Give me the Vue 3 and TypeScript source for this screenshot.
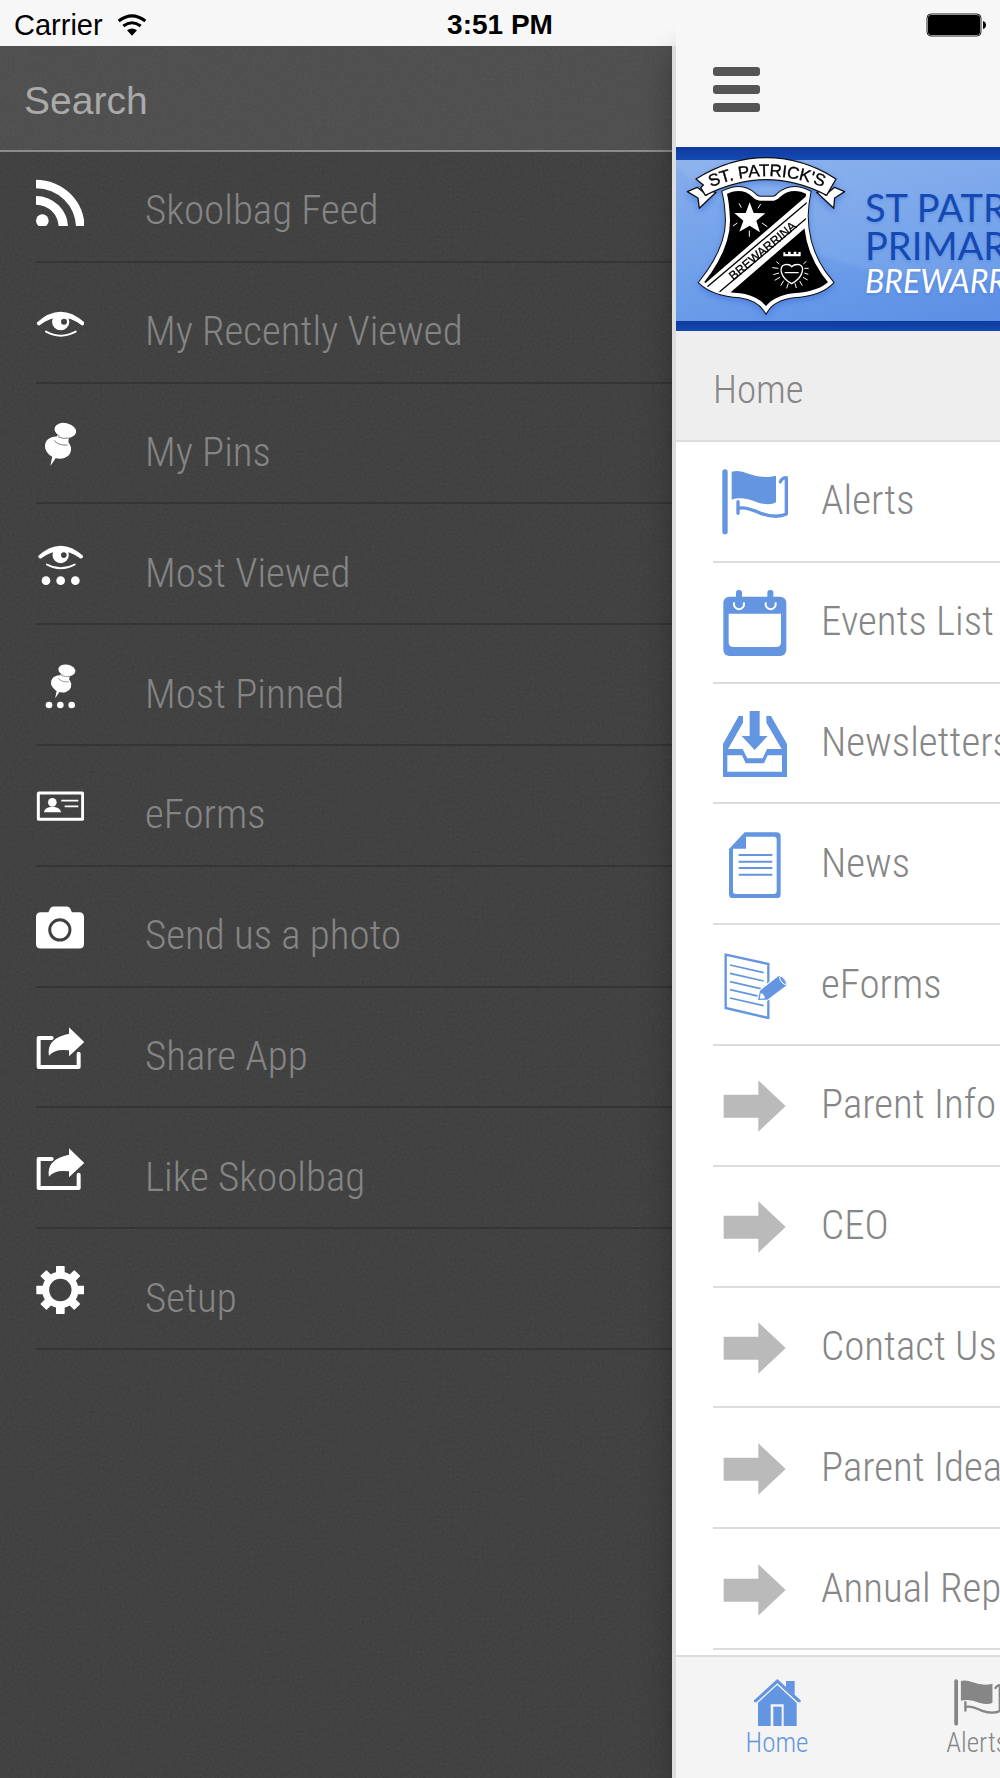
<script setup lang="ts">
import { ref } from 'vue'

interface Item {
  label: string
  icon: string
}

const query = ref('')

const eye =
  '<path d="M110 158Q182 92 254 158Q252 168 245 166Q182 118 119 166Q112 168 110 158Z"/><circle cx="182" cy="155" r="26"/><circle cx="192" cy="155" r="9" fill="#404040"/><path d="M138 185Q182 209 227 185" fill="none" stroke="#fff" stroke-width="6" stroke-linecap="round"/>'
const pin =
  '<ellipse cx="196" cy="481" rx="33" ry="22" transform="rotate(12 196 481)"/><path d="M172 496L207 502L203 530L163 516Z"/><ellipse cx="174" cy="533" rx="40" ry="32" transform="rotate(20 174 533)"/><path d="M157 558L168 563L151 588Z"/><path d="M163 511Q173 527 203 525M174 500Q190 508 206 504" fill="none" stroke="#404040" stroke-width="2"/>'
const flag =
  '<rect x="187" y="90" width="16" height="195" rx="8"/><path d="M215 97Q238 91 265 103Q308 119 348 109V189Q330 200 295 190Q245 170 215 181Z"/><path d="M361 127Q367 115 379 115V224Q350 238 305 223Q255 200 234 207M234 187V222" fill="none" stroke="currentColor" stroke-width="10" stroke-linecap="round" stroke-linejoin="round"/>'
const share =
  '<path d="M156 204H117V291H237V251" fill="none" stroke="#fff" stroke-width="12" stroke-linecap="round" stroke-linejoin="round"/><path d="M208 172L254 216L208 259V241Q165 235 148 257Q138 206 208 191Z" stroke="#404040" stroke-width="5" paint-order="stroke"/>'
const teeth = [0, 45, 90, 135, 180, 225, 270, 315]
  .map((a) => `<rect x="168" y="887" width="26" height="28" rx="2" transform="rotate(${a} 181 959)"/>`)
  .join('')

const icons: Record<string, { box: string; body: string }> = {
  rss: {
    box: '108 534 144 144',
    body: '<circle cx="127" cy="662" r="19"/><path d="M108 588A96 94 0 0 1 204 682H176A68 68 0 0 0 108 614Z"/><path d="M108 539A147 143 0 0 1 254 682H228A120 117 0 0 0 108 565Z"/>',
  },
  eye: { box: '108 87 144 144', body: eye },
  pin: { box: '108 450 144 144', body: pin },
  eyeDots: {
    box: '108 813 144 144',
    body: `<g transform="translate(182 827) scale(.94) translate(-182 -125)">${eye}</g><circle cx="138" cy="932" r="13"/><circle cx="182" cy="932" r="13"/><circle cx="226" cy="932" r="13"/>`,
  },
  pinDots: {
    box: '108 155 144 144',
    body: `<g transform="translate(153 162) scale(.78) translate(-135 -458)">${pin}</g><circle cx="147" cy="284" r="10"/><circle cx="181" cy="284" r="10"/><circle cx="215" cy="284" r="10"/>`,
  },
  card: {
    box: '108 517 144 144',
    body: '<rect x="115" y="550" width="133" height="79" rx="2" fill="none" stroke="#fff" stroke-width="9"/><circle cx="157" cy="578" r="13"/><path d="M132 608Q134 595 150 592H164Q181 595 183 608Z"/><path d="M184 573H235M194 590H235" stroke="#fff" stroke-width="5"/>',
  },
  camera: {
    box: '108 879 147 144',
    body: '<path d="M124 906H146L152 893Q155 888 162 888H202Q209 888 212 893L218 906H240Q255 906 255 921V1002Q255 1017 240 1017H123Q108 1017 108 1002V921Q108 906 124 906Z"/><circle cx="181" cy="960" r="31" fill="none" stroke="#404040" stroke-width="9"/>',
  },
  share: { box: '109 162 144 144', body: share },
  gear: {
    box: '108 887 144 144',
    body: `${teeth}<circle cx="181" cy="959" r="44" fill="none" stroke="#fff" stroke-width="21"/>`,
  },
  flag: { box: '186 89 198 198', body: flag },
  calendar: {
    box: '186 450 198 198',
    body: '<rect x="190" y="470" width="189" height="178" rx="18"/><path d="M206 521H363V607Q363 621 349 621H220Q206 621 206 607Z" fill="#fff"/><path d="M223 487A15 15 0 1 0 251 487M318 487A15 15 0 1 0 346 487" fill="none" stroke="#fff" stroke-width="6"/><rect x="228" y="450" width="18" height="52" rx="8"/><rect x="322" y="450" width="18" height="52" rx="8"/>',
  },
  tray: {
    box: '186 813 198 198',
    body: '<path d="M269 813H299V888H323L284 930L245 888H269Z"/><path fill-rule="evenodd" d="M189 912L236 828H249V848L204 927H248L262 955H308L321 927H365L319 848V828H333L381 912V1011H189ZM202 946V995H366V946H323L312 970H257L246 946Z"/>',
  },
  page: {
    box: '186 94 198 198',
    body: '<path fill-rule="evenodd" d="M254 95H350Q362 95 362 107V281Q362 293 350 293H219Q207 293 207 281V145ZM258 108V144H219V271Q219 280 228 280H342Q350 280 350 271V116Q350 108 342 108Z"/><path d="M236 163H337M236 183H337M236 202H337M236 222H337" stroke="currentColor" stroke-width="6"/>',
  },
  form: {
    box: '186 457 198 198',
    body: '<path d="M197 462L325 490V652L197 622Z" fill="none" stroke="currentColor" stroke-width="7"/><path d="M210 493L311 516M210 518L311 541M210 543L311 566M210 567L311 590M210 592L311 615" stroke="currentColor" stroke-width="5"/><path d="M294 598L300 570L355 527Q373 521 380 546L378 555L322 597Z" stroke="#fff" stroke-width="7" paint-order="stroke"/><path d="M299 594L302 578Q313 579 315 593Z" fill="#fff"/><ellipse cx="369" cy="539" rx="6" ry="14" transform="rotate(-36 369 539)" fill="none" stroke="#fff" stroke-width="3"/>',
  },
  arrow: { box: '186 820 198 198', body: '<path d="M191 885H295V842L377 919L295 996V954H191Z"/>' },
  house: {
    box: '283 1199 141 141',
    body: '<path d="M283 1263L353 1199L379 1223V1205H405V1246L423 1263V1269H415L353 1212L290 1269H283Z"/><path d="M295 1270L353 1217L411 1271V1340H372V1275H333V1340H295Z"/><path d="M341 1282H366V1340H341Z"/>',
  },
}

const drawerItems: Item[] = [
  { label: 'Skoolbag Feed', icon: 'rss' },
  { label: 'My Recently Viewed', icon: 'eye' },
  { label: 'My Pins', icon: 'pin' },
  { label: 'Most Viewed', icon: 'eyeDots' },
  { label: 'Most Pinned', icon: 'pinDots' },
  { label: 'eForms', icon: 'card' },
  { label: 'Send us a photo', icon: 'camera' },
  { label: 'Share App', icon: 'share' },
  { label: 'Like Skoolbag', icon: 'share' },
  { label: 'Setup', icon: 'gear' },
]

const homeItems: Item[] = [
  { label: 'Alerts', icon: 'flag' },
  { label: 'Events List', icon: 'calendar' },
  { label: 'Newsletters', icon: 'tray' },
  { label: 'News', icon: 'page' },
  { label: 'eForms', icon: 'form' },
  { label: 'Parent Info', icon: 'arrow' },
  { label: 'CEO', icon: 'arrow' },
  { label: 'Contact Us', icon: 'arrow' },
  { label: 'Parent Ideas', icon: 'arrow' },
  { label: 'Annual Report', icon: 'arrow' },
]

const tabs: Item[] = [
  { label: 'Home', icon: 'house' },
  { label: 'Alerts', icon: 'flag' },
]

const shield =
  'M134 131Q185 106 220 138Q230 149 240 149H282Q290 147 298 138Q335 106 385 131Q378 165 377 200Q378 315 452 400Q420 433 340 439Q280 447 258 482Q235 447 180 439Q100 433 65 400Q144 300 144 215Q142 160 134 131Z'
</script>

<template>
  <div class="screen">
    <header class="status">
      <div class="carrier">
        <span>Carrier</span>
        <svg class="wifi" viewBox="0 0 90 66" aria-hidden="true">
          <path d="M5 21Q45-10 85 21M19 36Q45 16 71 36" fill="none" stroke="#000" stroke-width="9" />
          <path d="M30 49Q45 38 60 49L45 65Z" />
        </svg>
      </div>
      <span class="time">3:51 PM</span>
      <svg class="battery" viewBox="0 0 60 24" aria-hidden="true">
        <rect x="1" y="1" width="54" height="22" rx="4" fill="none" stroke="#222" />
        <rect x="2" y="2" width="52" height="20" rx="3" />
        <path d="M57 8Q60 9 60 12Q60 15 57 16Z" />
      </svg>
    </header>

    <div class="body">
      <aside class="drawer">
        <svg class="grain" aria-hidden="true">
          <filter id="grain">
            <feTurbulence type="fractalNoise" baseFrequency="0.4" numOctaves="2" />
          </filter>
          <rect width="100%" height="100%" filter="url(#grain)" />
        </svg>
        <label class="search">
          <input v-model="query" type="search" placeholder="Search" aria-label="Search" />
        </label>
        <ul class="menu">
          <li v-for="item in drawerItems" :key="item.label">
            <a href="#">
              <svg :viewBox="icons[item.icon].box" aria-hidden="true" v-html="icons[item.icon].body" />
              <span>{{ item.label }}</span>
            </a>
          </li>
        </ul>
      </aside>

      <main class="panel">
        <div class="toolbar">
          <button type="button" class="burger" aria-label="Menu"><i /><i /><i /></button>
        </div>
        <div class="banner">
          <svg class="crest" viewBox="0 0 540 540" aria-hidden="true">
            <defs>
              <clipPath id="shield"><path :d="shield" /></clipPath>
              <path id="arc" d="M76 121Q258 42 446 121" />
            </defs>
            <path :d="shield" stroke="#111" stroke-width="18" />
            <path :d="shield" stroke="#fff" stroke-width="12" />
            <g clip-path="url(#shield)">
              <path d="M70 408L390 132V224L140 440Z" fill="#fff" />
              <path d="M60 432L390 153M110 436L390 199" stroke="#000" stroke-width="4" />
            </g>
            <text class="sash" transform="translate(160 395) rotate(-40)">BREWARRINA</text>
            <g fill="#fff">
              <path d="M209 160L221 192L256 193L229 215L240 250L209 230L178 248L190 215L163 192L197 192Z" />
              <path d="M310 310H316V315H324V308H332V315H341V308H349V315H355V309H362V322H310Z" />
            </g>
            <g fill="none" stroke="#fff" stroke-width="3">
              <path d="M184 176L177 163M234 178L242 165M172 222L159 231M246 222L262 233M208 245V263" />
              <path
                stroke-width="4"
                d="M335 404C298 384 296 350 315 347Q330 345 335 353Q343 345 358 347C374 352 372 384 335 404ZM314 371H356"
              />
              <path
                d="M298 345L289 338M295 358L277 356M297 372L280 377M300 385L284 394M311 395L302 410M325 403L320 418M345 403L349 417M359 396L367 410M369 385L383 393M373 372L385 376M373 358L386 358M370 345L379 337"
              />
            </g>
            <g fill="#fff" stroke="#111" stroke-width="4" stroke-linejoin="round">
              <path d="M22 128L52 115L80 138L74 122L108 130L58 178L54 147Z" />
              <path d="M494 128L464 115L436 138L442 122L410 130L461 178L464 147Z" />
              <path d="M48 90Q150 26 258 26Q370 26 468 90L440 139Q350 92 258 92Q170 92 76 139L62 116L70 108Z" />
            </g>
            <text class="ribbon"><textPath href="#arc" startOffset="50%">ST. PATRICK'S</textPath></text>
          </svg>
          <p class="school">
            <span>ST PATRICK'S</span>
            <span>PRIMARY SCHOOL</span>
            <em>BREWARRINA</em>
          </p>
        </div>
        <h1>Home</h1>
        <div class="scroll">
          <ul class="list">
            <li v-for="item in homeItems" :key="item.label">
              <a href="#" :class="{ plain: item.icon === 'arrow' }">
                <svg :viewBox="icons[item.icon].box" aria-hidden="true" v-html="icons[item.icon].body" />
                <span>{{ item.label }}</span>
              </a>
            </li>
          </ul>
        </div>
        <nav class="tabs">
          <a v-for="(tab, i) in tabs" :key="tab.label" href="#" :class="{ active: i === 0 }">
            <svg :viewBox="icons[tab.icon].box" aria-hidden="true" v-html="icons[tab.icon].body" />
            <span>{{ tab.label }}</span>
          </a>
        </nav>
      </main>
    </div>
  </div>
</template>

<style>
body {
  margin: 0;
}
</style>

<style scoped>
.screen {
  display: flex;
  flex-direction: column;
  min-height: 100vh;
  overflow: hidden;
  background: #f7f7f7;
  font-family: 'Roboto Condensed', Roboto, sans-serif;
  font-weight: 300;
  font-size: 41px;
}
a {
  color: inherit;
  text-decoration: none;
}
ul {
  margin: 0;
  padding: 0;
  list-style: none;
}
svg {
  flex: none;
  fill: currentColor;
}
.status {
  position: relative;
  z-index: 3;
  display: grid;
  grid-template-columns: 1fr auto 1fr;
  align-items: center;
  box-sizing: border-box;
  height: 46px;
  padding: 4px 14px 0;
  color: #000;
  font: 29px 'Liberation Sans', sans-serif;
}
.carrier {
  display: flex;
  align-items: center;
  gap: 14px;
}
.wifi {
  width: 30px;
  height: 22px;
}
.time {
  font-size: 28px;
  font-weight: 700;
}
.battery {
  justify-self: end;
  width: 60px;
  height: 24px;
}
.body {
  display: flex;
  flex: 1;
}
.drawer {
  position: relative;
  width: 67.2%;
  background: #3d3d3d;
  color: #858585;
}
.grain {
  position: absolute;
  inset: 0;
  width: 100%;
  height: 100%;
  opacity: 0.08;
}
.search {
  position: relative;
  display: block;
  box-sizing: border-box;
  height: 106px;
  border-bottom: 2px solid #8b8b8b;
  background: rgba(255, 255, 255, 0.08);
}
.search input {
  box-sizing: border-box;
  width: 100%;
  height: 100%;
  padding: 6px 24px 0;
  border: 0;
  outline: 0;
  background: none;
  color: #fff;
  font: 39px 'Liberation Sans', sans-serif;
  appearance: none;
}
.search input::placeholder {
  color: #aaa;
  opacity: 1;
}
.menu,
.list {
  display: grid;
  grid-auto-rows: 1fr;
  height: 1208px;
}
.menu {
  position: relative;
  margin: -10px 0 0 36px;
}
.menu a,
.list a {
  display: flex;
  align-items: center;
  box-sizing: border-box;
  height: 100%;
}
.menu a {
  gap: 61px;
  padding-top: 2px;
  border-bottom: 2px solid #353535;
}
.menu svg {
  width: 48px;
  height: 48px;
  color: #fff;
}
.menu span {
  padding-top: 16px;
}
.panel {
  position: relative;
  z-index: 1;
  display: flex;
  flex: 1;
  flex-direction: column;
  min-width: 0;
  border-left: 4px solid #dcdcdc;
  background: #fff;
  box-shadow: 0 8px 28px rgba(0, 0, 0, 0.3);
  color: #868686;
  white-space: nowrap;
}
.panel::before {
  content: '';
  position: absolute;
  top: -46px;
  right: 0;
  left: 0;
  height: 46px;
  background: #f7f7f7;
}
.toolbar {
  box-sizing: border-box;
  height: 101px;
  padding: 21px 37px 0;
  background: #f7f7f7;
}
.burger {
  display: flex;
  flex-direction: column;
  gap: 9px;
  width: 47px;
  padding: 0;
  border: 0;
  background: none;
}
.burger i {
  width: 100%;
  height: 9px;
  border-radius: 3px;
  background: #555;
}
.banner {
  display: flex;
  align-items: center;
  gap: 5px;
  box-sizing: border-box;
  height: 184px;
  overflow: hidden;
  padding-left: 4px;
  background:
    linear-gradient(#0f3a9d, #1449b3) 0 0 / 100% 13px no-repeat,
    linear-gradient(#0f3a9d, #1449b3) 0 100% / 100% 10px no-repeat,
    radial-gradient(circle at 90% -160%, rgba(255, 255, 255, 0.08) 76%, transparent 77%),
    linear-gradient(165deg, #85adeb 5%, #6d9ee9 55%, #5a8fe5 95%);
}
.crest {
  width: 180px;
  height: 180px;
  color: #000;
  filter: drop-shadow(0 3px 3px rgba(60, 110, 220, 0.6));
}
.sash,
.ribbon {
  font: 37px 'Liberation Sans', sans-serif;
  stroke: #000;
  stroke-width: 1px;
}
.ribbon {
  font-size: 51px;
  text-anchor: middle;
}
.school {
  display: flex;
  flex-direction: column;
  margin: 0;
  padding-top: 8px;
  color: #1449b3;
  font: 38px/38px Lato, sans-serif;
  text-shadow: 0 2px 3px rgba(30, 80, 190, 0.2);
}
.school em {
  color: #fff;
  font-size: 32px;
  line-height: 34px;
}
h1 {
  box-sizing: border-box;
  height: 111px;
  margin: 0;
  padding: 10px 37px 0;
  border-bottom: 2px solid #dcdcdc;
  background: #eee;
  font-weight: 300;
  font-size: 39px;
  line-height: 99px;
}
.scroll {
  flex: 1;
  margin-left: 37px;
  overflow: hidden;
}
.list a {
  gap: 33px;
  padding-left: 9px;
  border-bottom: 2px solid #dcdcdc;
}
.list svg {
  width: 66px;
  height: 66px;
  margin-top: 2px;
  color: #6495e0;
}
.list span {
  padding-bottom: 2px;
}
.list .plain svg {
  color: #bababa;
}
.tabs {
  display: flex;
  box-sizing: border-box;
  height: 123px;
  overflow: hidden;
  padding-left: 1px;
  border-top: 2px solid #dcdcdc;
  background: #f4f4f4;
  font-size: 27px;
  line-height: 34px;
}
.tabs a {
  display: flex;
  flex: none;
  flex-direction: column;
  align-items: center;
  width: 200px;
  padding-top: 22px;
}
.tabs svg {
  width: 47px;
  height: 47px;
}
.tabs .active {
  color: #6495e0;
}
</style>
